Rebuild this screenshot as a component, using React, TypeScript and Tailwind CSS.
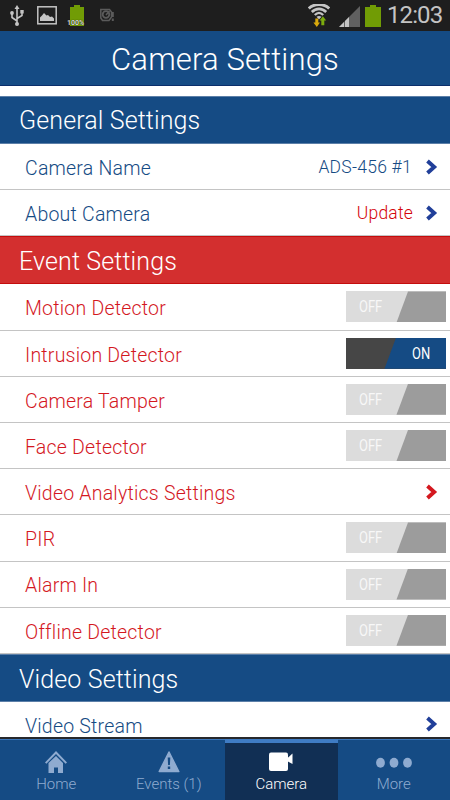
import React from 'react';
import clsx from 'clsx';

type Tone = 'blue' | 'red';

interface RowProps {
  label: string;
  tone: Tone;
  height?: string;
  children?: React.ReactNode;
}

const Chevron: React.FC<{ tone: Tone }> = ({ tone }) => (
  <svg width="12" height="16" viewBox="0 0 12 16" className="mr-[12px] ml-[14px] shrink-0">
    <path d="M1.500 2L8.200 8L1.500 14" fill="none" stroke={tone === 'blue' ? '#213f99' : '#d4181f'} strokeWidth="3.900" />
  </svg>
);

const Switch: React.FC<{ on?: boolean }> = ({ on }) => (
  <div className={clsx('relative w-[100px] h-[31px] mr-1 text-[16px]', on ? 'bg-[#464646]' : 'bg-[#dcdcdc]')}>
    <div
      className={clsx(
        'absolute inset-0',
        on ? 'bg-[#154b84] [clip-path:polygon(50%_0,100%_0,100%_100%,38.5%_100%)]' : 'bg-[#9c9c9c] [clip-path:polygon(62%_0,100%_0,100%_100%,50.5%_100%)]'
      )}
    />
    <span
      className={clsx(
        'absolute top-0 leading-[32px] text-white origin-left scale-x-[0.81]',
        on ? 'left-[66px]' : 'left-[13px] opacity-80'
      )}
    >
      {on ? 'ON' : 'OFF'}
    </span>
  </div>
);

const SectionHeader: React.FC<{ title: string; tone: Tone; className?: string }> = ({ title, tone, className }) => (
  <h2
    className={clsx(
      'shrink-0 pl-[19px] font-light text-[25px] tracking-[0.120px] text-white border-y',
      tone === 'blue' ? 'bg-[#154b84] border-[#5c7fa8]' : 'bg-[#d32f2f] border-[#c40d0d]',
      className
    )}
  >
    {title}
  </h2>
);

const Row: React.FC<RowProps> = ({ label, tone, height = 'h-[46.2px]', children }) => (
  <div
    className={clsx(
      'shrink-0 flex items-center border-b border-[#c4c4c4] pl-[25px]',
      tone === 'blue' ? 'text-[#154b84]' : 'text-[#d4181f]',
      height
    )}
  >
    <span className="relative top-[2px] flex-1 font-light text-[19.500px] tracking-[0.220px] whitespace-nowrap [font-variant-ligatures:none]">
      {label}
    </span>
    {children}
  </div>
);

const StatusBar = () => (
  <div className="h-[31px] shrink-0 bg-[#1e1e1e] flex items-start text-[#c4c4c4]">
    <svg width="14" height="22" viewBox="0 0 14 22" className="ml-[10px] mt-[5px]" fill="none" stroke="currentColor" strokeWidth="1.6">
      <path d="M7 3V19M7 16L2 12.500V8.500M7 13.500L12 10.500V7" />
      <path d="M7 0L9.500 4H4.500Z" fill="currentColor" stroke="none" />
      <circle cx="7" cy="19" r="2" fill="currentColor" stroke="none" />
      <circle cx="2" cy="8" r="1.900" fill="currentColor" stroke="none" />
      <path d="M10.300 5H13.700V8.500H10.300Z" fill="currentColor" stroke="none" />
    </svg>
    <svg width="20" height="19" viewBox="0 0 20 19" className="ml-[13px] mt-[6px]">
      <rect x="0.800" y="0.800" width="18.400" height="17" fill="none" stroke="currentColor" strokeWidth="1.500" />
      <path d="M3 15V11.500L5 9.500L7 7L9.500 9.500L11 9L13 11L15 10.500L17 12.500V15Z" fill="currentColor" />
    </svg>
    <div className="relative ml-[11px] mt-[5px] w-[18px] h-[22px]">
      <svg width="18" height="22" viewBox="0 0 18 22">
        <path d="M2 2H6V0H12V2H16V21H2Z" fill="#719c05" />
      </svg>
      <span className="absolute -left-px top-[14px] text-[7px] leading-[8px] font-bold text-[#d8d8d8] [text-shadow:0_0_1px_#000]">100%</span>
    </div>
    <svg width="15" height="14" viewBox="0 0 15 14" className="ml-[14px] mt-[8px]" stroke="#5b5b5b" fill="none">
      <path d="M0.800 1.500H9.500L11.500 4V9L9 12.500H2.500L0.800 10Z" strokeWidth="1.500" />
      <circle cx="6" cy="6.500" r="3.300" strokeWidth="1.800" />
      <path d="M6 7L9.500 3" strokeWidth="1.500" />
      <path d="M12.800 4V9M12.800 10.500V13" strokeWidth="2" />
    </svg>
    <svg width="22" height="24" viewBox="0 0 22 24" className="ml-[193px] mt-[4px]" fill="none">
      <path d="M0.800 4.500C6 -0.800 16 -0.800 21.200 4.500" stroke="currentColor" strokeWidth="2.800" />
      <path d="M3.800 8C8 3.800 14 3.800 18.200 8" stroke="currentColor" strokeWidth="2.600" />
      <path d="M6.800 11C9.500 8.300 12.500 8.300 15.200 11" stroke="currentColor" strokeWidth="2.300" />
      <path d="M8.500 12.800Q11 11 13.500 12.800L11 15.500Z" fill="currentColor" />
      <path d="M7.300 14.500H10.300V18.500H12L8.800 23L5.400 18.500H7.300Z" fill="#d9a90c" />
      <path d="M13.300 21.200H16.300V16.500H18.200L14.900 12.200L11.600 16.500H13.300Z" fill="#7cab0e" />
    </svg>
    <svg width="21" height="21" viewBox="0 0 21 21" className="ml-[9px] mt-[6px]">
      <path d="M0 21L21 0V21Z" fill="#606060" />
      <path d="M0 21L5 16V21ZM6 21V15L10 11V21Z" fill="currentColor" />
    </svg>
    <svg width="16" height="22" viewBox="0 0 16 22" className="ml-[5px] mt-[5px]">
      <path d="M0 2H5V0H11V2H16V22H0Z" fill="#719c05" />
    </svg>
    <span className="ml-[6px] text-[24px] leading-[31px] tracking-[-0.900px] whitespace-nowrap">12:03</span>
  </div>
);

const HomeIcon = () => (
  <svg width="22" height="22" viewBox="0 0 22 22" fill="currentColor">
    <path d="M11 0L22 11.500L20.600 12.800L11 3L1.400 12.800L0 11.500Z" />
    <path d="M11 5L18 12V22H13V16.500H9V22H3.500V12Z" />
  </svg>
);

const AlertIcon = () => (
  <svg width="22" height="22" viewBox="0 0 22 22">
    <path d="M11 1L20.800 20.600H1.200Z" fill="currentColor" stroke="currentColor" strokeWidth="1.500" strokeLinejoin="round" />
    <path d="M9.700 6.500H12.300L11.900 14H10.100ZM9.800 15.500H12.200V18H9.800Z" fill="#154b84" />
  </svg>
);

const CameraIcon = () => (
  <svg width="24" height="22" viewBox="0 0 24 22" fill="currentColor">
    <rect x="0" y="1.500" width="19" height="18.500" rx="2" />
    <path d="M17 8.500L23.500 2.500V13L17 9.500Z" />
  </svg>
);

const MoreIcon = () => (
  <svg width="36" height="22" viewBox="0 0 36 22" fill="currentColor">
    <ellipse cx="4.500" cy="11.800" rx="4.400" ry="5" />
    <ellipse cx="18" cy="11.800" rx="4.400" ry="5" />
    <ellipse cx="31.500" cy="11.800" rx="4.400" ry="5" />
  </svg>
);

const TABS = [
  { label: 'Home', icon: <HomeIcon /> },
  { label: 'Events (1)', icon: <AlertIcon /> },
  { label: 'Camera', icon: <CameraIcon />, active: true },
  { label: 'More', icon: <MoreIcon /> },
];

const EVENT_ROWS = [
  { label: 'Motion Detector' },
  { label: 'Intrusion Detector', on: true },
  { label: 'Camera Tamper' },
  { label: 'Face Detector' },
  { label: 'Video Analytics Settings', link: true },
  { label: 'PIR' },
  { label: 'Alarm In' },
  { label: 'Offline Detector' },
];

export default function App() {
  return (
    <div className="w-[450px] h-[800px] flex flex-col overflow-hidden bg-white font-['Roboto',sans-serif]">
      <StatusBar />
      <h1 className="h-[55px] shrink-0 bg-[#154b84] border-b border-[#0b2e6b] text-center text-white font-light text-[31px] leading-[58px] tracking-[0.150px]">
        Camera Settings
      </h1>

      <main className="h-[651px] shrink-0 pt-[10px] flex flex-col overflow-hidden">
        <SectionHeader title="General Settings" tone="blue" className="h-[48px] leading-[48px]" />
        <Row label="Camera Name" tone="blue" height="h-[46px]">
          <span className="relative top-px font-light text-[17.500px] tracking-[0.250px]">ADS-456 #1</span>
          <Chevron tone="blue" />
        </Row>
        <Row label="About Camera" tone="blue" height="h-[46px]">
          <span className="relative top-px -mr-px font-[350] text-[17.500px] tracking-[0.200px] text-[#d4050b]">Update</span>
          <Chevron tone="blue" />
        </Row>

        <SectionHeader title="Event Settings" tone="red" className="h-[48.400px] leading-[49px]" />
        {EVENT_ROWS.map((row) => (
          <Row key={row.label} label={row.label} tone="red">
            {row.link ? <Chevron tone="red" /> : <Switch on={row.on} />}
          </Row>
        ))}

        <SectionHeader title="Video Settings" tone="blue" className="h-[48px] leading-[49px]" />
        <Row label="Video Stream" tone="blue">
          <Chevron tone="blue" />
        </Row>
      </main>

      {/* Bottom tab bar */}
      <nav className="flex-1 grid grid-cols-4 border-t-2 border-[#26282c] bg-[#154b84]">
        {TABS.map((tab) => (
          <div
            key={tab.label}
            className={clsx(
              'flex flex-col items-center font-light text-[15px]',
              tab.active ? 'bg-[#112f54] border-t-4 border-[#3f7cc4] pt-[8px] text-white' : 'border-t border-[#3a76bb] pt-[11px] text-[#8fabd0]'
            )}
          >
            {tab.icon}
            <span className="leading-[22px] whitespace-nowrap">{tab.label}</span>
          </div>
        ))}
      </nav>
    </div>
  );
}
